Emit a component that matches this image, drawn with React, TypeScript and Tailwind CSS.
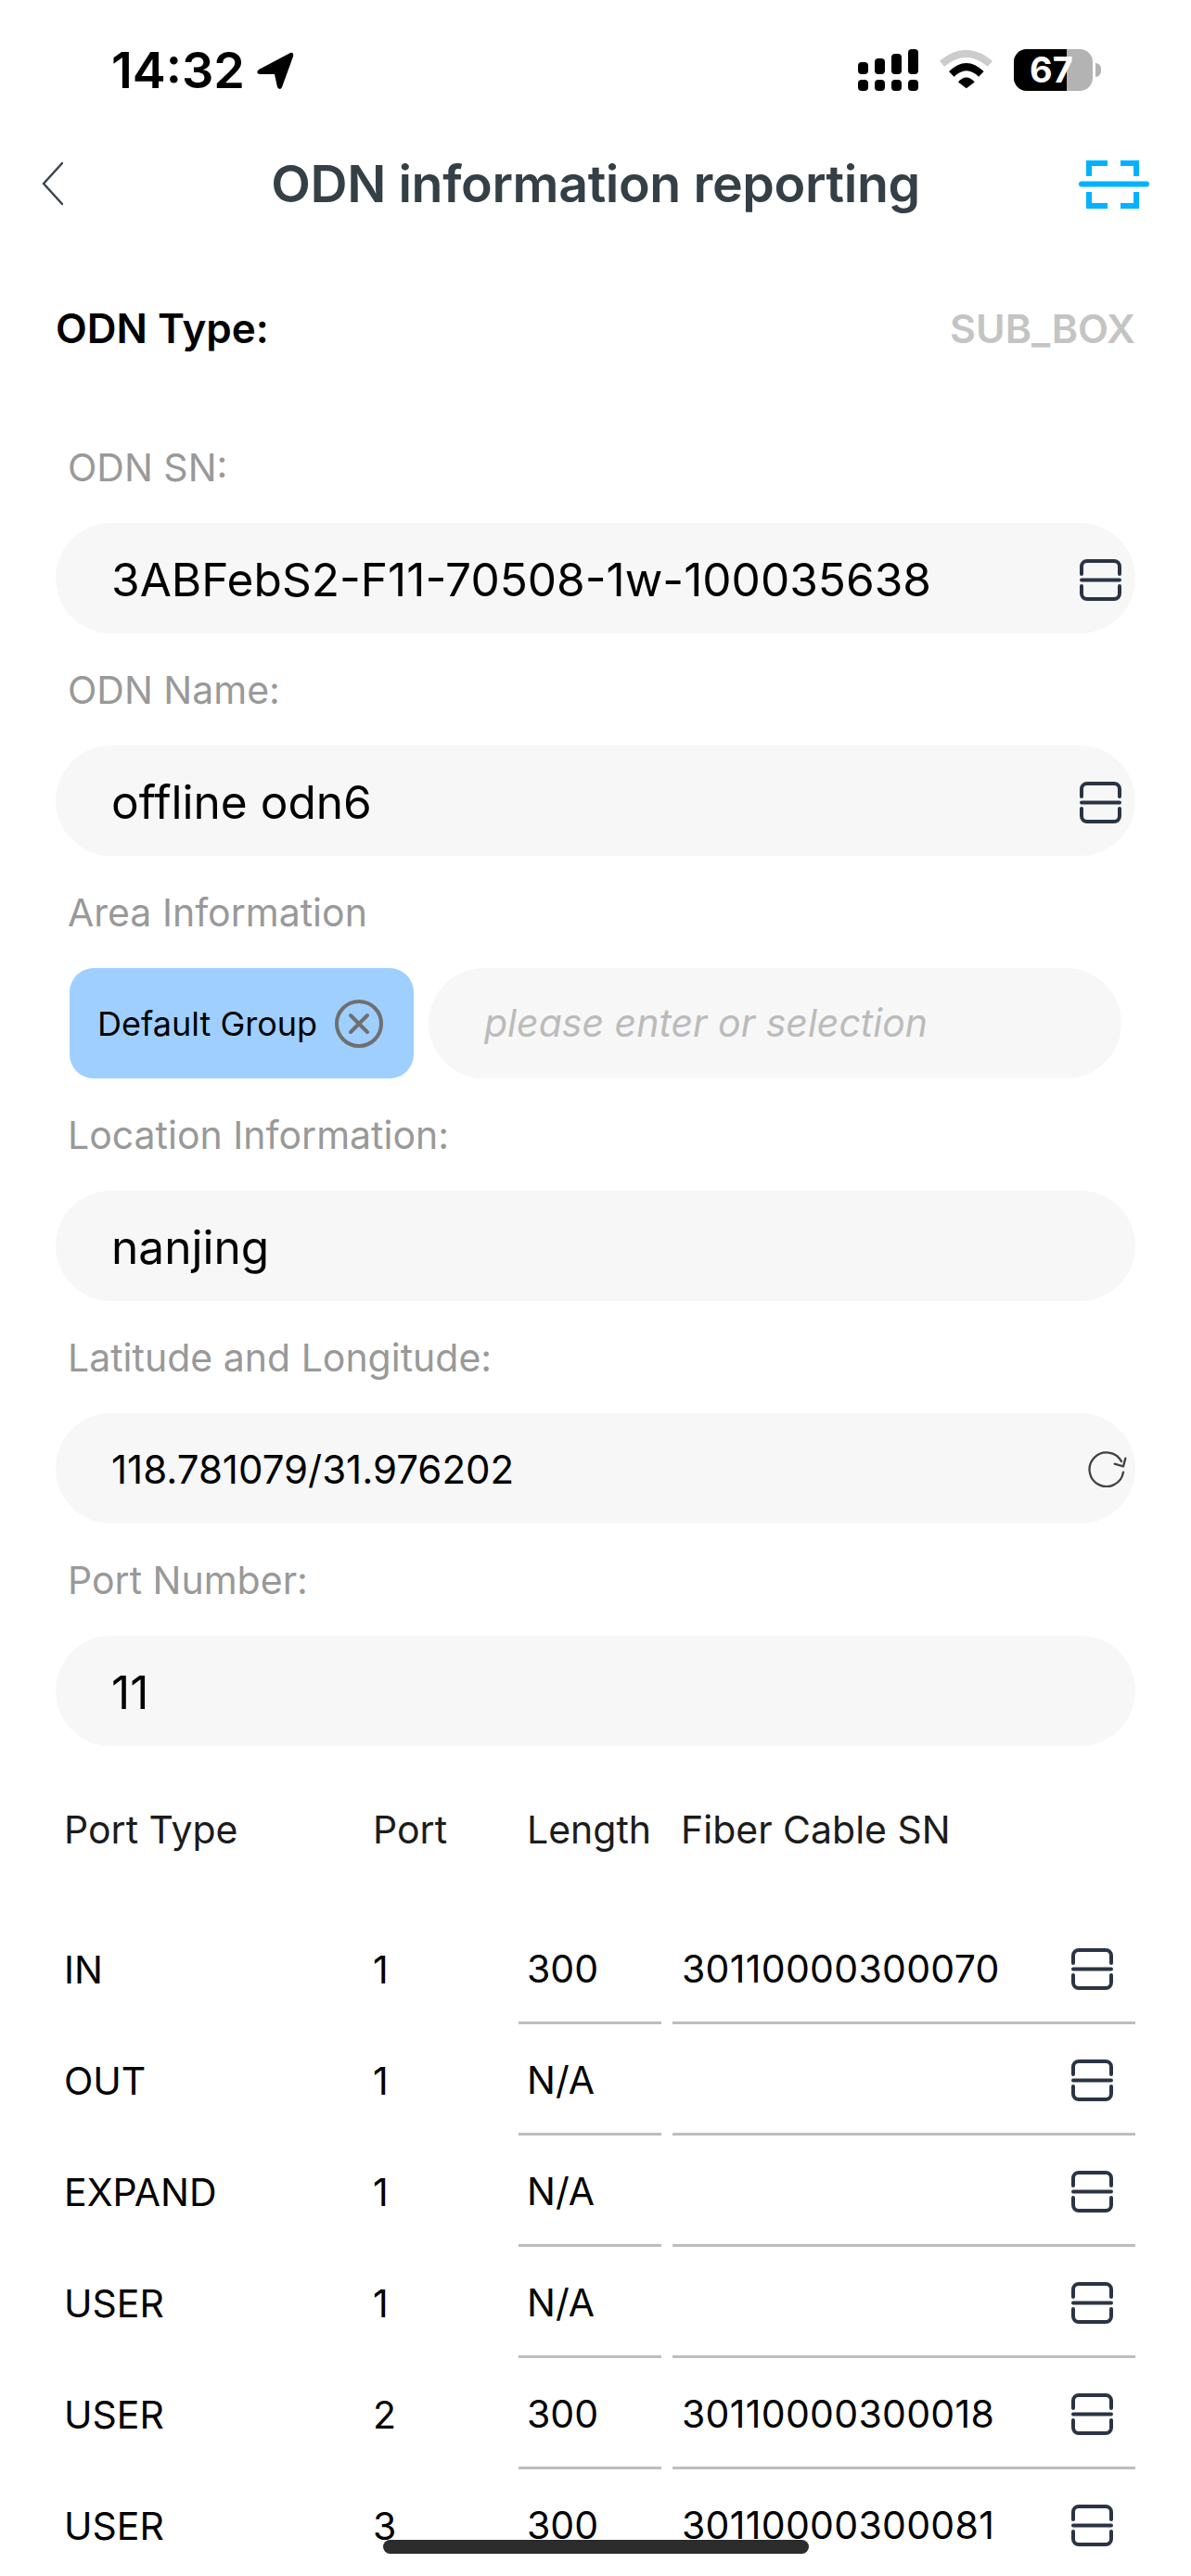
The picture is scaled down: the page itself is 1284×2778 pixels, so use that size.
import React from "react";

const ports = [
  { type: "IN", port: "1", length: "300", sn: "30110000300070" },
  { type: "OUT", port: "1", length: "N/A", sn: "" },
  { type: "EXPAND", port: "1", length: "N/A", sn: "" },
  { type: "USER", port: "1", length: "N/A", sn: "" },
  { type: "USER", port: "2", length: "300", sn: "30110000300018" },
  { type: "USER", port: "3", length: "300", sn: "30110000300081" },
];

const ScanIcon = () => (
  <svg width="45" height="45" viewBox="0 0 45 45" fill="none" stroke="#2a3444" strokeWidth="4" strokeLinecap="round" className="shrink-0 mt-[4px]">
    <path d="M2 16V8a6 6 0 0 1 6-6h29a6 6 0 0 1 6 6v8" />
    <path d="M2 22.5h41" />
    <path d="M2 29v8a6 6 0 0 0 6 6h29a6 6 0 0 0 6-6v-8" />
  </svg>
);

const RefreshIcon = () => (
  <svg width="42" height="40" viewBox="520 134 126 120" fill="none" stroke="#444140" strokeWidth="7" strokeLinecap="round" strokeLinejoin="round" className="shrink-0">
    <path d="M634 205A55 55 0 1 1 628 170" />
    <path d="M641 160L634 186L606 178" />
  </svg>
);

const Field = ({ label, children }: { label: string; children: React.ReactNode }) => (
  <div>
    <div className="h-[121px] flex items-center pl-[13px] pt-[2px] text-[41px] text-[#999999]">{label}</div>
    {children}
  </div>
);

const Input = ({ value, icon }: { value: string; icon?: React.ReactNode }) => (
  <div className="h-[119px] rounded-full bg-[#f7f7f7] flex items-center justify-between pl-[60px] pr-[15px]">
    <span className="text-[49.6px] text-black pt-[3px]">{value}</span>
    {icon}
  </div>
);

export default function App() {
  return (
    <div className="relative w-[1284px] h-[2778px] overflow-hidden bg-white font-['Inter',sans-serif]">
      {/* status bar */}
      <div className="h-[150px] flex items-center justify-between pl-[120px] pr-[97px]">
        <div className="flex items-center gap-[12px]">
          <span className="text-[54px] font-semibold text-black leading-none pt-[2px]">14:32</span>
          <svg width="41" height="41" viewBox="0 0 41 41" fill="black" className="mt-[2px]">
            <path d="M37 1L3 19Q-1 23 4 24L20 24L23 38Q26 42 28 38L40 5Q41 0 37 1Z" />
          </svg>
        </div>
        <div className="flex items-center">
          <svg width="65" height="45" viewBox="0 0 65 45" fill="black">
            <rect x="0" y="14" width="11" height="13" rx="4" />
            <rect x="18" y="10" width="11" height="17" rx="4" />
            <rect x="36" y="5" width="11" height="22" rx="4" />
            <rect x="54" y="0" width="11" height="27" rx="4" />
            <rect x="0" y="33" width="11" height="12" rx="4" />
            <rect x="18" y="33" width="11" height="12" rx="4" />
            <rect x="36" y="33" width="11" height="12" rx="4" />
            <rect x="54" y="33" width="11" height="12" rx="4" />
          </svg>
          <svg width="57" height="42" viewBox="398 73 172 128" className="ml-[23px]">
            <path d="M405 118Q484 52 563 118" fill="none" stroke="#cccccc" strokeWidth="24" />
            <path d="M436 152Q485 104 534 152" fill="none" stroke="black" strokeWidth="24" />
            <path d="M458 178Q485 148 512 178L485 199Z" fill="black" />
          </svg>
          <div className="ml-[23px] relative w-[85px] h-[45px] rounded-[14px] overflow-hidden bg-[#b3b3b3]">
            <div className="w-[57px] h-full bg-black" />
            <div className="absolute inset-0 flex items-center pl-[17px] text-[38px] font-bold text-white leading-none">67</div>
          </div>
          <div className="ml-[3px] w-[6px] h-[15px] rounded-r-full bg-[#b3b3b3]" />
        </div>
      </div>

      {/* header */}
      <div className="h-[96px] grid grid-cols-[76px_1fr_76px] items-center pl-[45px] pr-[45px]">
        <svg width="23" height="46" viewBox="0 0 23 46" fill="none" stroke="#3b444b" strokeWidth="2.5" strokeLinecap="round" strokeLinejoin="round">
          <path d="M22 1L2 23L22 45" />
        </svg>
        <h1 className="text-[55.5px] font-semibold tracking-[-0.4px] text-[#343f46] leading-none text-center">ODN information reporting</h1>
        <svg width="76" height="52" viewBox="0 0 76 52" fill="none" stroke="#00b2ff" className="mt-[2px]">
          <path d="M31 3H11V17" strokeWidth="6" />
          <path d="M45 3H62V17" strokeWidth="6" />
          <path d="M31 49H11V34" strokeWidth="6" />
          <path d="M45 49H62V34" strokeWidth="6" />
          <path d="M3 25.5H73" strokeWidth="6" strokeLinecap="round" />
        </svg>
      </div>

      {/* form */}
      <div className="px-[60px]">
        <div className="h-[197px] flex items-start justify-between pt-[80px] font-semibold leading-[56px]">
          <span className="text-[44px] text-black">ODN Type:</span>
          <span className="text-[43px] text-[#c4c4c4]">SUB_BOX</span>
        </div>

        <Field label="ODN SN:">
          <Input value="3ABFebS2-F11-70508-1w-100035638" icon={<ScanIcon />} />
        </Field>
        <Field label="ODN Name:">
          <Input value="offline odn6" icon={<ScanIcon />} />
        </Field>
        <Field label="Area Information">
          <div className="flex gap-[16px] px-[15px]">
            <div className="w-[371px] h-[119px] rounded-[26px] bg-[#9fcfff] flex items-center pl-[30px] gap-[19px]">
              <span className="text-[36px] text-black">Default Group</span>
              <svg width="52" height="52" viewBox="0 0 52 52" fill="none" stroke="#6f6f6f" strokeWidth="4" strokeLinecap="round">
                <circle cx="26" cy="26" r="24" />
                <path d="M17 17L35 35M35 17L17 35" />
              </svg>
            </div>
            <div className="flex-1 h-[119px] rounded-full bg-[#f7f7f7] flex items-center pl-[60px] text-[41px] italic text-[#bbbbbb]">
              please enter or selection
            </div>
          </div>
        </Field>
        <Field label="Location Information:">
          <Input value="nanjing" />
        </Field>
        <Field label="Latitude and Longitude:">
          <div className="h-[119px] rounded-full bg-[#f7f7f7] flex items-center justify-between pl-[60px] pr-[9px]">
            <span className="text-[42px] text-black pt-[2px]">118.781079/31.976202</span>
            <RefreshIcon />
          </div>
        </Field>
        <Field label="Port Number:">
          <Input value="11" />
        </Field>

        {/* port table */}
        <div className="h-[180px] grid grid-cols-[333px_166px_166px_1fr] items-center text-[41px] text-[#1c1c1c] pt-[2px]">
          <span className="pl-[9px]">Port Type</span>
          <span className="pl-[9px]">Port</span>
          <span className="pl-[9px]">Length</span>
          <span className="pl-[9px]">Fiber Cable SN</span>
        </div>
        {ports.map((row, idx) => (
          <div key={idx} className="h-[120px] grid grid-cols-[333px_166px_154px_1fr] text-[41px] text-black">
            <span className="pl-[9px] pt-[3px] flex items-center">{row.type}</span>
            <span className="pl-[9px] pt-[3px] flex items-center">{row.port}</span>
            <span className="pl-[9px] pt-[5px] flex items-center border-b-[3px] border-[#bdbdbd]">{row.length}</span>
            <div className="ml-[12px] pl-[10px] pr-[24px] flex items-center justify-between border-b-[3px] border-[#bdbdbd]">
              <span className="pt-[5px] tracking-[0.3px]">{row.sn}</span>
              <ScanIcon />
            </div>
          </div>
        ))}
      </div>

      {/* home indicator */}
      <div className="absolute left-[413px] top-[2739px] w-[459px] h-[15px] rounded-full bg-[#2c2c2c]" />
    </div>
  );
}
